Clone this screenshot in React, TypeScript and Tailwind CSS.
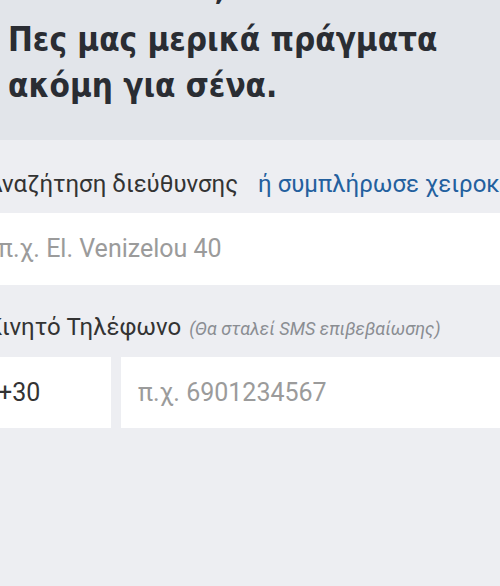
export default function App() {
  return (
    <div className="w-[500px] h-[586px] overflow-hidden bg-[#edeef2]">
      <div className="bg-[#e2e5ea] h-[140px] pl-[8px] overflow-hidden">
        <h1
          className="mt-[-41px] text-[33px] leading-[46px] font-bold text-[#2a2d33] whitespace-nowrap"
          style={{ fontFamily: '"DejaVu Sans Condensed", "DejaVu Sans", sans-serif' }}
        >
          <span className="block leading-[58px]">Γεια σου Λία,</span>
          <span className="block">Πες μας μερικά πράγματα</span>
          <span className="block">ακόμη για σένα.</span>
        </h1>
      </div>
      <div className="ml-[-19px] pt-[26px]" style={{ fontFamily: 'Roboto, sans-serif' }}>
        <div className="flex items-baseline gap-[20px] whitespace-nowrap h-[47px] pl-[6px]">
          <span className="text-[24px] text-[#333]">Αναζήτηση διεύθυνσης</span>
          <span className="text-[24px] text-[#23609e]">ή συμπλήρωσε χειροκίνητα</span>
        </div>
        <div className="bg-white h-[72px] w-[560px] flex items-center pl-[17px] text-[25px] text-[#9b9b9b]">
          π.χ. El. Venizelou 40
        </div>
        <div className="flex items-baseline gap-[8px] whitespace-nowrap mt-[24px] h-[48px] pl-[6px]">
          <span className="text-[24px] text-[#333]">Κινητό Τηλέφωνο</span>
          <span className="text-[18px] italic text-[#8a8d92]">(Θα σταλεί SMS επιβεβαίωσης)</span>
        </div>
        <div className="flex gap-[10px] h-[71px]">
          <div className="bg-white w-[130px] shrink-0 flex items-center pl-[17px] text-[25px] text-[#333]">+30</div>
          <div className="bg-white w-[420px] shrink-0 flex items-center pl-[17px] text-[25px] text-[#9b9b9b]">π.χ. 6901234567</div>
        </div>
      </div>
    </div>
  );
}
